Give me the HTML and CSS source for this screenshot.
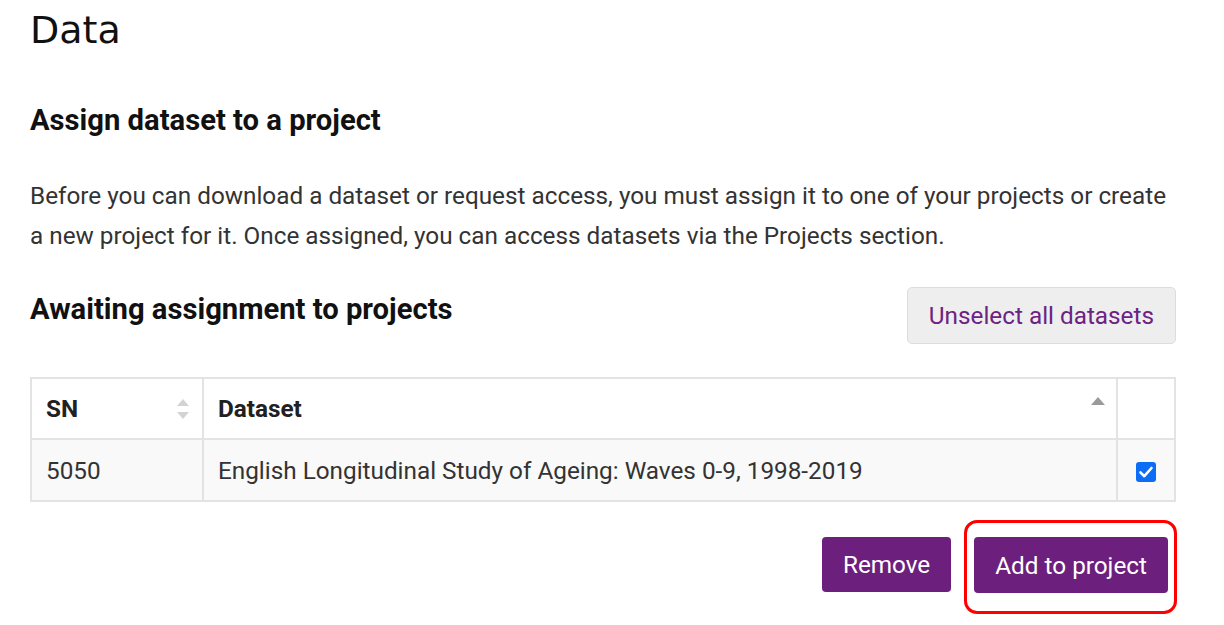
FILE: index.html
```html
<!DOCTYPE html>
<html lang="en">
<head>
<meta charset="utf-8">
<title>Data</title>
<link rel="stylesheet" href="styles.css">
</head>
<body>
<main class="page">
  <h1 class="title">Data</h1>
  <h2 class="section-title">Assign dataset to a project</h2>
  <p class="intro">Before you can download a dataset or request access, you must assign it to one of your projects or create a new project for it. Once assigned, you can access datasets via the Projects section.</p>
  <div class="awaiting-head">
    <h2 class="section-title awaiting-title">Awaiting assignment to projects</h2>
    <button class="btn-light" type="button">Unselect all datasets</button>
  </div>
  <table class="data-table">
    <thead>
      <tr>
        <th class="col-sn"><div class="th-inner"><span>SN</span>
          <svg class="sort-both" width="14" height="22" viewBox="0 0 14 22"><path d="M7 1 L13 8 H1 Z" fill="#d3d3d3"/><path d="M7 21 L13 14 H1 Z" fill="#d3d3d3"/></svg></div></th>
        <th class="col-ds"><div class="th-inner"><span>Dataset</span>
          <svg class="sort-up" width="16" height="10" viewBox="0 0 16 10"><path d="M8 1 L15 9 H1 Z" fill="#9a9a9a"/></svg></div></th>
        <th class="col-check"></th>
      </tr>
    </thead>
    <tbody>
      <tr>
        <td class="col-sn">5050</td>
        <td class="col-ds">English Longitudinal Study of Ageing: Waves 0-9, 1998-2019</td>
        <td class="col-check"><span class="checkbox"><svg width="20" height="20" viewBox="0 0 20 20"><rect x="0" y="0" width="20" height="20" rx="3" fill="#0b6cf5"/><path d="M4.5 10.5 L8.3 14.2 L15.5 6" stroke="#fff" stroke-width="2.6" fill="none" stroke-linecap="round" stroke-linejoin="round"/></svg></span></td>
      </tr>
    </tbody>
  </table>
  <div class="actions">
    <button class="btn-primary btn-remove" type="button">Remove</button>
    <div class="highlight">
      <button class="btn-primary" type="button">Add to project</button>
    </div>
  </div>
</main>
</body>
</html>
```
FILE: styles.css
```css
* { box-sizing: border-box; }
html, body { margin: 0; padding: 0; background: #fff; }
body { font-family: Roboto, "Liberation Sans", Arial, sans-serif; color: #212121; }
.page { width: 1224px; padding: 0 48px 0 30px; }
.title {
  font-family: "DejaVu Sans", "Noto Sans", sans-serif;
  font-weight: 400;
  font-size: 38px;
  line-height: 46px;
  margin: 0;
  padding-top: 7px;
  color: #111;
}
.section-title {
  font-size: 29.2px;
  font-weight: 700;
  margin: 0;
  color: #111;
  line-height: 34px;
}
.title + .section-title { margin-top: 50px; }
.intro {
  font-size: 24.3px;
  line-height: 40px;
  color: #333;
  margin: 39px 0 0 0;
}
.awaiting-head {
  display: flex;
  justify-content: space-between;
  align-items: flex-start;
  margin-top: 31px;
}
.awaiting-title { margin-top: 5px; }
.btn-light {
  font-family: Roboto, "Liberation Sans", sans-serif;
  font-size: 24.3px;
  color: #6c2382;
  background: #eeeeee;
  border: 1px solid #dcdcdc;
  border-radius: 5px;
  height: 57px;
  padding: 0 21px;
}
.data-table {
  width: 100%;
  border-collapse: collapse;
  margin-top: 33px;
  border: 2px solid #e0e0e0;
  font-size: 24.3px;
}
.data-table th, .data-table td {
  border: 2px solid #e3e3e3;
  padding: 0 14px;
  text-align: left;
}
.data-table th { height: 61px; font-weight: 700; color: #212121; background: #fff; }
.data-table td { height: 62px; color: #333; background: #f9f9f9; }
.col-sn { width: 172px; }
.col-check { width: 58px; text-align: center !important; padding: 0 !important; }
.th-inner { display: flex; justify-content: space-between; align-items: center; }
.sort-both { margin-right: -2px; }
.sort-up { margin-top: -16px; margin-right: -4px; }
.checkbox { display: inline-flex; vertical-align: middle; }
.actions {
  display: flex;
  justify-content: flex-end;
  align-items: flex-start;
  gap: 13px;
  margin-top: 18px;
}
.btn-primary {
  font-family: Roboto, "Liberation Sans", sans-serif;
  font-size: 24.3px;
  color: #fff;
  background: #6d1f7e;
  border: none;
  border-radius: 4px;
  height: 56px;
  padding: 0 21px;
}
.btn-remove { margin-top: 17px; height: 55px; }
.highlight {
  border: 3px solid #ff0000;
  border-radius: 13px;
  padding: 14px 6px 18px 7px;
  margin-right: -1px;
}
```
